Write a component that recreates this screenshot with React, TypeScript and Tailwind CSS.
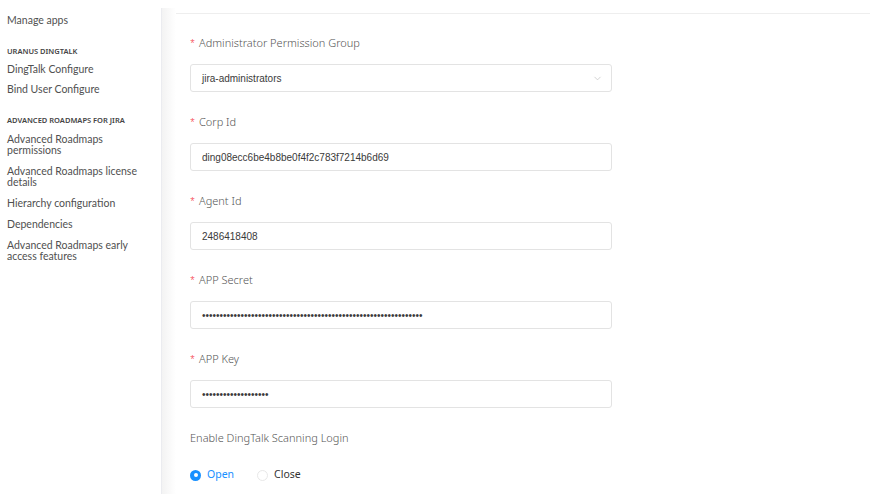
import { ChevronDown } from "lucide-react";

const sideFont = { fontFamily: 'Lato, "Noto Sans", sans-serif' };
const formFont = { fontFamily: '"Noto Sans", "Open Sans", sans-serif' };
const valueFont = { fontFamily: '"Liberation Sans", Arial, sans-serif' };

const Field = ({ label, value, select }: { label: string; value: string; select?: boolean }) => {
  return (
    <div className="flex flex-col">
      <div className="h-[22px] flex items-center text-[11px] font-light text-[#555]" style={formFont}>
        <span className="text-[#f5222d] mr-[4px] text-[9px]">*</span>
        {label}
      </div>
      <div className="mt-[10px] h-[28px] w-[422px] border border-[#e3e3e3] rounded-[3px] bg-white flex items-center justify-between pl-[11px] pr-[8px]">
        <span className="text-[10px] text-[#3a3a3a]" style={valueFont}>
          {value}
        </span>
        {select && <ChevronDown className="w-[11px] h-[11px] text-[#bfbfbf]" strokeWidth={1.5} />}
      </div>
    </div>
  );
};

const SideLink = ({ children }: { children: React.ReactNode }) => (
  <div className="text-[10.5px] leading-[11px] text-[#505050]">{children}</div>
);

const SideHead = ({ children }: { children: React.ReactNode }) => (
  <div className="text-[7.5px] font-semibold text-[#444] uppercase" style={formFont}>
    {children}
  </div>
);

const App = () => {
  return (
    <div className="w-[870px] h-[494px] bg-white flex overflow-hidden">
      <div className="w-[162px] shrink-0 flex flex-col pt-[8px]" style={sideFont}>
        <div className="flex-1 border-r border-[#ebecf0] pl-[7px] pr-[16px] flex flex-col">
          <div className="mt-[5px] text-[10.5px] text-[#505050]">Manage apps</div>
          <div className="mt-[17px]">
            <SideHead>Uranus DingTalk</SideHead>
          </div>
          <div className="mt-[7px] flex flex-col gap-[9px]">
            <SideLink>DingTalk Configure</SideLink>
            <SideLink>Bind User Configure</SideLink>
          </div>
          <div className="mt-[20px]">
            <SideHead>Advanced Roadmaps for Jira</SideHead>
          </div>
          <div className="mt-[8px] flex flex-col gap-[10px]">
            <SideLink>Advanced Roadmaps permissions</SideLink>
            <SideLink>Advanced Roadmaps license details</SideLink>
            <SideLink>Hierarchy configuration</SideLink>
            <SideLink>Dependencies</SideLink>
            <SideLink>Advanced Roadmaps early access features</SideLink>
          </div>
        </div>
      </div>
      <div className="flex-1 flex flex-col pt-[8px]">
        <div className="flex-1 flex">
          <div className="w-[14px] bg-gradient-to-r from-[#f3f3f3] to-white" />
          <div className="flex-1 flex flex-col">
            <div className="h-[5px]" />
            <div className="border-t border-[#eeeeee] pl-[14px] pt-[18px] flex flex-col gap-[19px]">
              <Field label="Administrator Permission Group" value="jira-administrators" select />
              <Field label="Corp Id" value="ding08ecc6be4b8be0f4f2c783f7214b6d69" />
              <Field label="Agent Id" value="2486418408" />
              <Field label="APP Secret" value={"•".repeat(63)} />
              <Field label="APP Key" value={"•".repeat(19)} />
              <div className="flex flex-col" style={formFont}>
                <div className="h-[22px] flex items-center text-[11px] font-light text-[#555]">
                  Enable DingTalk Scanning Login
                </div>
                <div className="mt-[12px] h-[28px] flex items-center text-[10.5px]">
                  <span className="w-[11px] h-[11px] rounded-full bg-[#1890ff] flex items-center justify-center">
                    <span className="w-[4px] h-[4px] rounded-full bg-white" />
                  </span>
                  <span className="ml-[6px] text-[#1890ff]">Open</span>
                  <span className="ml-[23px] w-[11px] h-[11px] rounded-full border border-[#e8e8e8] bg-white" />
                  <span className="ml-[6px] text-[#333]">Close</span>
                </div>
              </div>
            </div>
          </div>
        </div>
      </div>
    </div>
  );
};

export default App;
